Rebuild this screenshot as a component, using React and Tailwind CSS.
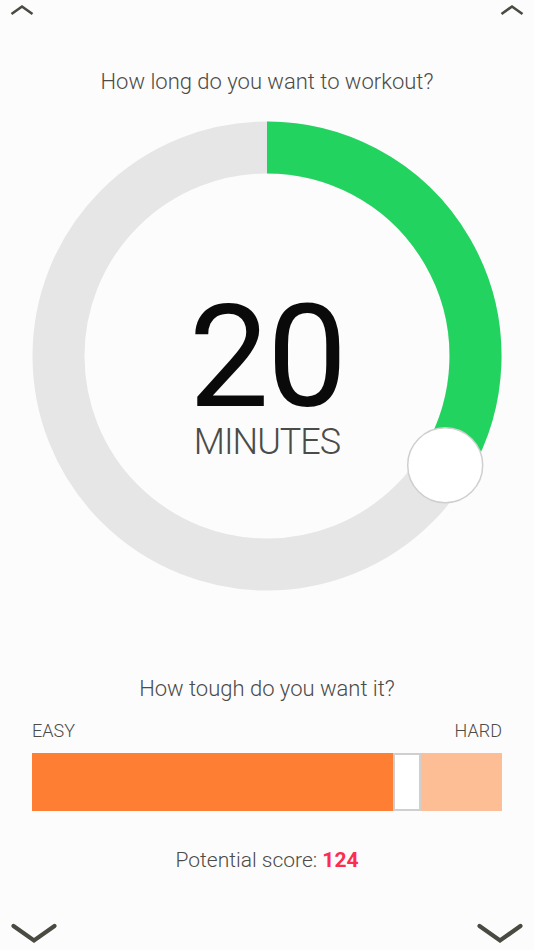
import React from "react";

function ChevronUp({ className }) {
  return (
    <svg width="24" height="12" viewBox="0 0 24 12" className={className}>
      <path d="M1.5 10 L12 2.5 L22.5 10" fill="none" stroke="#4a4a42" strokeWidth="2.6" />
    </svg>
  );
}

function ChevronDown({ className }) {
  return (
    <svg width="46" height="22" viewBox="0 0 46 22" className={className}>
      <path d="M2.5 3 L23 17.5 L43.5 3" fill="none" stroke="#4a4a42" strokeWidth="4.2" strokeLinecap="round" />
    </svg>
  );
}

function Ring() {
  const cx = 235;
  const cy = 235;
  const r = 208.5;
  const a1 = (120 * Math.PI) / 180;
  const ex = cx + r * Math.sin(a1);
  const ey = cy - r * Math.cos(a1);
  const a2 = (121.5 * Math.PI) / 180;
  const kx = cx + 209 * Math.sin(a2);
  const ky = cy - 209 * Math.cos(a2);
  return (
    <svg width="470" height="470" viewBox="0 0 470 470">
      <circle cx={cx} cy={cy} r={r} fill="none" stroke="#e6e6e6" strokeWidth="52" />
      <path
        d={`M ${cx} ${cy - r} A ${r} ${r} 0 0 1 ${ex} ${ey}`}
        fill="none"
        stroke="#23d35f"
        strokeWidth="52"
      />
      <circle cx={kx} cy={ky} r="37.5" fill="#ffffff" stroke="#cfcfcf" strokeWidth="1.5" />
    </svg>
  );
}

export default function App() {
  return (
    <div
      className="w-[534px] h-[950px] bg-[#fcfcfc] flex flex-col overflow-hidden"
      style={{ fontFamily: "Roboto, 'Liberation Sans', sans-serif" }}
    >
      <div className="flex justify-between px-[10px] pt-[4px] h-[16px]">
        <ChevronUp />
        <ChevronUp />
      </div>
      <div className="mt-[53px] h-[26px] text-center text-[22px] leading-[26px] font-light text-[#4b4b47]">
        How long do you want to workout?
      </div>
      <div className="mt-[26px] relative w-[470px] h-[470px] ml-[32px]">
        <Ring />
        <div className="absolute inset-x-0 top-[176px] flex flex-col items-center">
          <div className="text-[143px] leading-[120px] font-normal text-[#0a0a0a] tracking-[-2px]">20</div>
          <div className="text-[36px] leading-[40px] font-light text-[#4b4b47] tracking-[-1px] mt-[5px]">MINUTES</div>
        </div>
      </div>
      <div className="mt-[85px] h-[26px] text-center text-[22px] leading-[26px] font-light text-[#4b4b47]">
        How tough do you want it?
      </div>
      <div className="mt-[18px] mx-[32px] flex justify-between text-[18px] leading-[22px] font-light text-[#4b4b47]">
        <span>EASY</span>
        <span>HARD</span>
      </div>
      <div className="mt-[11px] mx-[32px] h-[58px] flex">
        <div className="w-[361px] bg-[#fe7e33]" />
        <div className="w-[28px] bg-white border-2 border-[#cfcfcf]" />
        <div className="flex-1 bg-[#fdbe95]" />
      </div>
      <div className="mt-[36px] h-[26px] text-center text-[21px] leading-[26px] font-light text-[#4b4b47]">
        Potential score: <span className="font-bold text-[#fc2d4f]">124</span>
      </div>
      <div className="mt-auto flex justify-between px-[11px] pb-[5px]">
        <ChevronDown />
        <ChevronDown />
      </div>
    </div>
  );
}
